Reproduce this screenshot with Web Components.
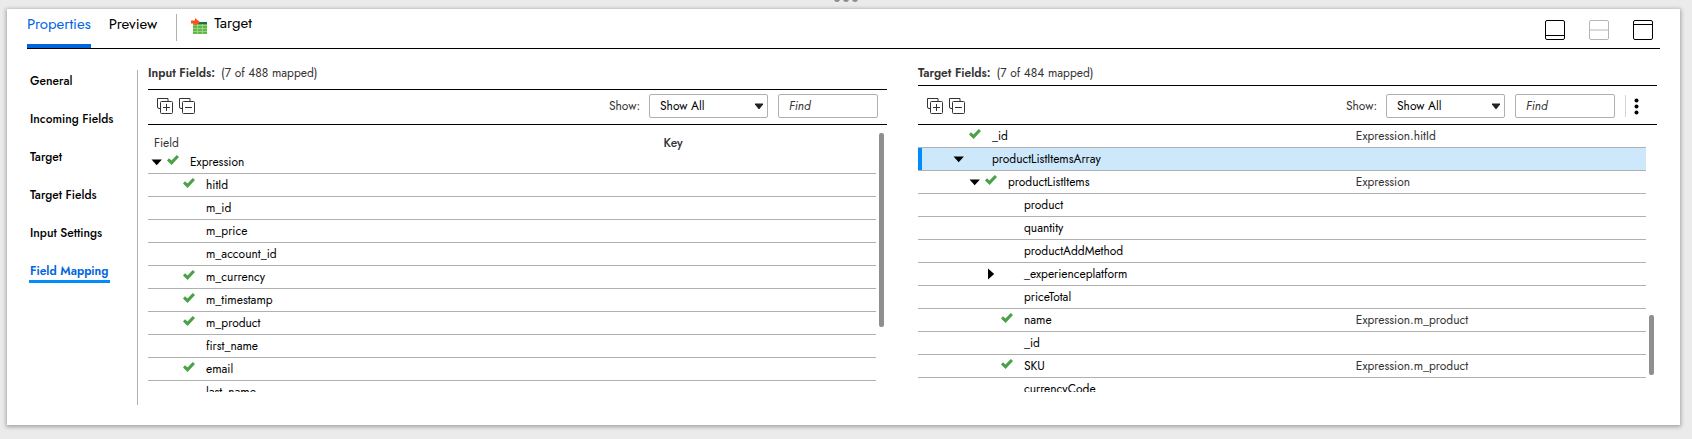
<!DOCTYPE html>
<html lang="en">
<head>
<meta charset="utf-8">
<title>Target – Field Mapping</title>
<style>
  html { height: 100%; }
  body {
    margin: 0; height: 100%; display: flex; flex-direction: column;
    background: #ebebeb; color: #000;
    font: 12px/16px Jost, Lato, sans-serif;
  }
</style>
</head>
<body>
<properties-window></properties-window>

<script>
/* Shared icons */
const icons = {
  check: '<svg class="check" width="12" height="10" viewBox="0 0 12 10" aria-hidden="true"><path d="M0 5.4 2 3.2 4.5 5.5 9.8 0 12 2 4.6 10Z" fill="#4aa147"/></svg>',
  open: '<svg width="12" height="12" viewBox="0 0 12 12" aria-hidden="true"><path d="M.5 3.5h10.4L5.7 9.3Z"/></svg>',
  closed: '<svg width="12" height="12" viewBox="0 0 12 12" aria-hidden="true"><path d="M3 .5v11L9.2 6Z"/></svg>',
  expandAll: '<svg width="16" height="16" viewBox="0 0 16 16" fill="none" stroke="#333" aria-hidden="true"><path d="M3.5 10.500h-1.500a1.500 1.500 0 0 1-1.500-1.500V.5h10.500V3"/><rect x="3.500" y="3.500" width="12" height="12" rx="1"/><path d="M9.500 6v7M6 9.500h7"/></svg>',
  collapseAll: '<svg width="16" height="16" viewBox="0 0 16 16" fill="none" stroke="#333" aria-hidden="true"><path d="M3.500 10.500h-1.500a1.500 1.500 0 0 1-1.500-1.500V.5h10.500V3"/><rect x="3.500" y="3.500" width="12" height="12" rx="1"/><path d="M6 9.500h7"/></svg>'
};

function define(name, html, setup) {
  customElements.define(name, class extends HTMLElement {
    connectedCallback() {
      if (this.shadowRoot) return;
      this.attachShadow({ mode: 'open' }).innerHTML = html;
      if (setup) setup.call(this, this.shadowRoot);
    }
  });
}

/* Dots by which the window below is resized */
define('drag-handle', `
  <style>
    :host { display: flex; justify-content: center; gap: 3px; height: 9px; flex: none; overflow: hidden; }
    i { width: 6px; height: 6px; margin-top: -4px; border-radius: 3px; background: #8d8d8d; }
  </style>
  <i></i><i></i><i></i>`);

/* Tabs, object name and window layout buttons */
define('window-header', `
  <style>
    :host { display: flex; align-items: flex-start; justify-content: space-between; height: 39px; margin: 0 20px; border-bottom: 1px solid #000; flex: none; }
    nav, .name, .layouts { display: flex; }
    nav { gap: 18px; }
    button { padding: 0; border: 0; background: none; font: inherit; color: inherit; }
    .tab { font-size: 15px; line-height: 20px; height: 39px; padding: 5px 0 10px; border-bottom: 4px solid transparent; box-sizing: border-box; }
    .tab.active { color: #0065df; border-color: #0065df; }
    .name { gap: 7px; align-items: flex-start; margin: 5px 0 0 19px; padding: 0 14px; border-left: 1px solid #b0b0b0; height: 27px; font-size: 15px; line-height: 18px; }
    .name svg { margin-top: 4px; }
    .left { display: flex; }
    .layouts { gap: 24px; margin: 11px 7px 0 0; }
    .layouts svg { display: block; }
    button:disabled { color: #b5b5b5; }
  </style>
  <div class="left">
    <nav aria-label="Views">
      <button class="tab active">Properties</button>
      <button class="tab">Preview</button>
    </nav>
    <div class="name">
      <svg width="16" height="16" viewBox="0 0 16 16" aria-hidden="true">
        <path d="M2 4h14v12H2Z" fill="#61b745"/><path d="M8 4h8v2H7Z" fill="#137348"/>
        <path d="M2 7.500h14M2 10.500h14M2 13.500h14" stroke="#a5d893" stroke-width=".8"/><path d="M6.500 6v10M11.500 6v10" stroke="#a5d893" stroke-width=".8"/>
        <path d="M0 2.500h4V0l5 4-5 4V5.500H0Z" fill="#ff4f1f"/>
      </svg>
      <span>Target</span>
    </div>
  </div>
  <div class="layouts">
    <button aria-label="Minimize panel"><svg width="20" height="20" viewBox="0 0 20 20" fill="none" stroke="currentColor"><rect x=".5" y=".5" width="19" height="19" rx="1.500"/><path d="M0 15.500h20"/></svg></button>
    <button aria-label="Split panel" disabled><svg width="20" height="20" viewBox="0 0 20 20" fill="none" stroke="currentColor"><rect x=".5" y=".5" width="19" height="19" rx="1.500"/><path d="M1 10h18" stroke="#dadada" stroke-width="2"/></svg></button>
    <button aria-label="Maximize panel"><svg width="20" height="20" viewBox="0 0 20 20" fill="none" stroke="currentColor"><rect x=".5" y=".5" width="19" height="19" rx="1.500"/><path d="M0 4.500h20"/></svg></button>
  </div>`);

/* Vertical list of property sections */
define('section-nav', `
  <style>
    :host { display: block; flex: none; width: 108px; padding: 3px 0 0 2px; margin-top: 21px; border-right: 1px solid #b0b0b0; }
    ul { display: flex; flex-direction: column; align-items: flex-start; gap: 22px; margin: 0; padding: 0; list-style: none; }
    a { display: block; padding: 0 1px; color: inherit; text-decoration: none; font-weight: 500; white-space: nowrap; }
    a[aria-current] { color: #0065df; font-weight: 600; padding-bottom: 1px; border-bottom: 3px solid #008cff; }
  </style>
  <nav aria-label="Sections"><ul>
    <li><a href="#general">General</a></li>
    <li><a href="#incoming">Incoming Fields</a></li>
    <li><a href="#target">Target</a></li>
    <li><a href="#target-fields">Target Fields</a></li>
    <li><a href="#input">Input Settings</a></li>
    <li><a href="#mapping" aria-current="page">Field Mapping</a></li>
  </ul></nav>`);

/* Expand/collapse buttons, filter and search */
define('pane-toolbar', `
  <style>
    :host { display: flex; align-items: center; padding: 4px 9px 6px; border: solid #000; border-width: 1px 0; }
    button { padding: 0; border: 0; background: none; display: block; }
    button svg { display: block; }
    .tree { display: flex; gap: 6px; margin-right: auto; }
    label { color: #333; margin-right: 9px; }
    .select { display: grid; width: 119px; margin-right: 10px; }
    select, input { box-sizing: border-box; height: 24px; border: 1px solid #b0b0b0; border-radius: 2px; background: #fff; color: #000; font: inherit; padding: 0 10px; margin: 0; outline: 0; }
    select, .select svg { grid-area: 1 / 1; }
    select { appearance: none; width: 100%; }
    .select svg { place-self: center end; margin-right: 5px; pointer-events: none; }
    input { width: 100px; font-style: italic; }
    input::placeholder { color: #333; opacity: 1; }
  </style>
  <div class="tree">
    <button aria-label="Expand all">${icons.expandAll}</button>
    <button aria-label="Collapse all">${icons.collapseAll}</button>
  </div>
  <label for="show">Show:</label>
  <div class="select">
    <select id="show"><option>Show All</option><option>Show Mapped</option></select>
    <svg width="8" height="6" viewBox="0 0 8 6" aria-hidden="true"><path d="M0 .5h8v1L4.500 6h-1L0 1.500Z" fill="#222"/></svg>
  </div>
  <input id="find" type="search" placeholder="Find" aria-label="Find">
  <slot></slot>`);

/* "More" menu button behind a thin divider */
define('more-menu', `
  <style>
    :host { display: flex; align-items: center; height: 22px; margin-left: 10px; padding: 0 9px 0 8px; border-left: 1px solid #d5d5d5; }
    button { padding: 0; border: 0; background: none; }
    svg { display: block; }
  </style>
  <button aria-label="More actions"><svg width="5" height="17" viewBox="0 0 5 17"><circle cx="2.500" cy="2.500" r="2"/><circle cx="2.500" cy="8.500" r="2"/><circle cx="2.500" cy="14.500" r="2"/></svg></button>`);

const trees = {
  /* label, depth, mapped, toggle, second column */
  input: {
    head: ['Field', 'Key'], columns: ['70%', '30%'], thumb: [8, 194, 65],
    rows: [
      ['Expression', 0, 1, 'open'], ['hitId', 1, 1], ['m_id', 1], ['m_price', 1], ['m_account_id', 1],
      ['m_currency', 1, 1], ['m_timestamp', 1, 1], ['m_product', 1, 1], ['first_name', 1], ['email', 1, 1], ['last_name', 1]
    ]
  },
  target: {
    columns: ['60%', '40%'], thumb: [190, 60, 17], selected: 'productListItemsArray',
    rows: [
      ['_id', 2, 1, '', 'Expression.hitId'], ['productListItemsArray', 2, 0, 'open'],
      ['productListItems', 3, 1, 'open', 'Expression'], ['product', 4], ['quantity', 4], ['productAddMethod', 4],
      ['_experienceplatform', 4, 0, 'closed'], ['priceTotal', 4], ['name', 4, 1, '', 'Expression.m_product'],
      ['_id', 4], ['SKU', 4, 1, '', 'Expression.m_product'], ['currencyCode', 4]
    ]
  }
};

define('field-tree', `
  <style>
    :host { display: flex; gap: 3px; flex: 1 1 0; min-height: 0; overflow: hidden; padding-right: 3px; }
    .view { flex: 1; min-width: 0; overflow: hidden; }
    table { width: 100%; table-layout: fixed; border-collapse: separate; border-spacing: 0; }
    th { height: 26px; box-sizing: border-box; padding: 10px 6px 0; text-align: left; font-weight: 400; color: #333; line-height: 16px; }
    th:last-child { font-weight: 500; }
    td { height: 23px; box-sizing: border-box; padding: 0; border-bottom: 1px solid #b0b0b0; white-space: nowrap; }
    td + td { color: #333; padding-left: 1px; }
    .field { display: grid; grid-template-columns: 12px 12px auto; column-gap: 4px; align-items: center; justify-content: start; padding-left: calc(3px + 16px * var(--depth)); height: 22px; }
    .field svg { display: block; }
    .field .check { margin-bottom: 4px; }
    .field span:last-child { margin-left: 7px; }
    .selected td { background: #cde8fb; }
    .selected td:first-child { box-shadow: inset 4px 0 #008cff; }
    .rail { display: flex; flex-direction: column; width: 5px; }
    .thumb { background: #8f8f8f; border-radius: 2px; }
  </style>
  <div class="view"><table></table></div>
  <div class="rail" aria-hidden="true"><i></i><i class="thumb"></i><i></i></div>`,
  function (root) {
    const tree = trees[this.getAttribute('source')];
    root.querySelector('table').innerHTML =
      '<colgroup>' + tree.columns.map(w => `<col style="width:${w}">`).join('') + '</colgroup>' +
      (tree.head ? '<thead><tr>' + tree.head.map(h => `<th scope="col">${h}</th>`).join('') + '</tr></thead>' : '') +
      '<tbody>' + tree.rows.map(([label, depth, mapped, toggle, value]) => `
        <tr${label === tree.selected ? ' class="selected"' : ''}>
          <td><div class="field" style="--depth:${depth}"><span>${toggle ? icons[toggle] : ''}</span><span>${mapped ? icons.check : ''}</span><span>${label}</span></div></td>
          <td>${value || ''}</td>
        </tr>`).join('') + '</tbody>';
    root.querySelectorAll('.rail i').forEach((part, i) => { part.style.flex = tree.thumb[i] + ' 1 0'; });
  });

/* Titled pane: slots for the title, count, toolbar and tree */
define('field-pane', `
  <style>
    :host { display: flex; flex-direction: column; flex: 1 1 0; min-width: 0; padding-bottom: 13px; }
    h2 { margin: 0; padding: 16px 0 var(--title-gap, 8px); font-size: 12px; line-height: 16px; font-weight: 400; color: #333; display: flex; gap: 6px; }
    slot[name=toolbar]::slotted(*) { padding-top: var(--toolbar-gap, 4px); }
  </style>
  <h2><slot name="title"></slot><slot name="count"></slot></h2>
  <slot name="toolbar"></slot>
  <slot></slot>`);

/* The white window and its contents */
define('properties-window', `
  <style>
    :host { display: flex; flex-direction: column; flex: 1; min-height: 0; }
    main { display: flex; flex-direction: column; flex: 1; min-height: 0; margin: 0 12px 14px 7px; background: #fff; box-shadow: 0 1px 4px 1px rgba(0, 0, 0, .3); }
    .content { display: flex; flex: 1; min-height: 0; padding: 0 23px 20px 20px; }
    .panes { display: flex; gap: 31px; flex: 1; min-width: 0; margin-left: 10px; }
    b { font-weight: 600; }
    .target { --title-gap: 4px; --toolbar-gap: 8px; }
  </style>
  <drag-handle></drag-handle>
  <main>
    <window-header></window-header>
    <div class="content">
      <section-nav></section-nav>
      <div class="panes">
        <field-pane>
          <b slot="title">Input Fields:</b><span slot="count">(7 of 488 mapped)</span>
          <pane-toolbar slot="toolbar"></pane-toolbar>
          <field-tree source="input"></field-tree>
        </field-pane>
        <field-pane class="target">
          <b slot="title">Target Fields:</b><span slot="count">(7 of 484 mapped)</span>
          <pane-toolbar slot="toolbar"><more-menu></more-menu></pane-toolbar>
          <field-tree source="target"></field-tree>
        </field-pane>
      </div>
    </div>
  </main>`);
</script>
</body>
</html>
